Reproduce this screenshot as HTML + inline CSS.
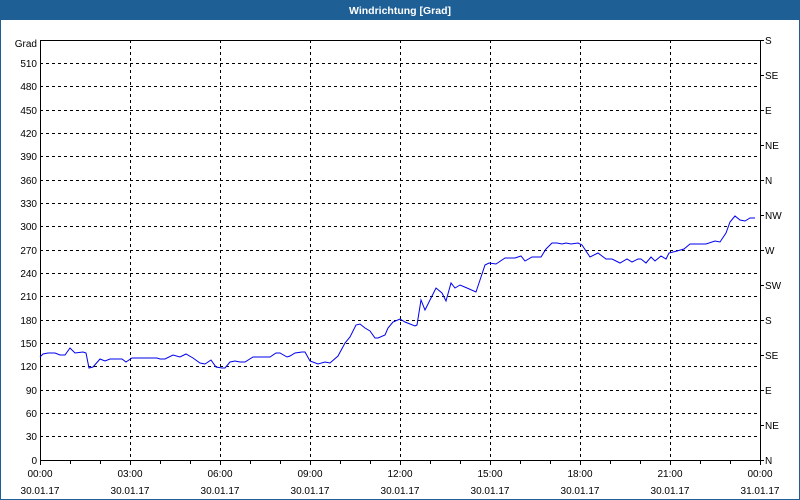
<!DOCTYPE html>
<html><head><meta charset="utf-8"><style>
html,body{margin:0;padding:0;background:#fff}
svg{display:block}
text{font-family:"Liberation Sans",sans-serif;font-size:10px;fill:#000}
</style></head><body>
<svg width="800" height="500" viewBox="0 0 800 500" xmlns="http://www.w3.org/2000/svg">
<rect x="0" y="0" width="800" height="500" fill="#1e6096"/>
<rect x="1" y="20" width="798" height="479" fill="#fff"/>
<text x="400" y="14" text-anchor="middle" style="font-weight:bold;fill:#fff;font-size:10.5px">Windrichtung [Grad]</text>
<g stroke="#000" stroke-width="1" stroke-dasharray="3,3" shape-rendering="crispEdges">
<path d="M40 63.5H760M40 86.5H760M40 110.5H760M40 133.5H760M40 156.5H760M40 180.5H760M40 203.5H760M40 226.5H760M40 250.5H760M40 273.5H760M40 296.5H760M40 320.5H760M40 343.5H760M40 366.5H760M40 390.5H760M40 413.5H760M40 436.5H760"/>
<path d="M130.5 40V460M220.5 40V460M310.5 40V460M400.5 40V460M490.5 40V460M580.5 40V460M670.5 40V460"/>
</g>
<g stroke="#000" stroke-width="1" fill="none" shape-rendering="crispEdges">
<rect x="40.5" y="40.5" width="720" height="420"/>
<path d="M760 40.5H764M760 75.5H764M760 110.5H764M760 145.5H764M760 180.5H764M760 215.5H764M760 250.5H764M760 285.5H764M760 320.5H764M760 355.5H764M760 390.5H764M760 425.5H764M760 460.5H764"/>
<path d="M40.5 460V465M70.5 460V464M100.5 460V464M130.5 460V465M160.5 460V464M190.5 460V464M220.5 460V465M250.5 460V464M280.5 460V464M310.5 460V465M340.5 460V464M370.5 460V464M400.5 460V465M430.5 460V464M460.5 460V464M490.5 460V465M520.5 460V464M550.5 460V464M580.5 460V465M610.5 460V464M640.5 460V464M670.5 460V465M700.5 460V464M730.5 460V464M760.5 460V465"/>
</g>
<polyline fill="none" stroke="#0000ee" stroke-width="1" points="40,357 43,354 48,353 55,353 60,355 65,355 70,348 75,353 83,352 86,353 89,368 93,367 100,359 105,361 110,359 118,359 122,359 126,362 132,358 157,358 160,359 165,359 173,355 180,357 186,354 193,358 200,363 205,364 211,360 216,367 222,368 225,368 230,362 235,361 240,362 245,362 253,357 270,357 276,353 280,353 287,357 290,356 295,353 302,352 305,352 310,361 318,364 325,362 330,363 338,356 345,343 350,337 356,325 360,324 365,328 370,331 375,338 378,338 385,335 388,328 393,322 400,319 405,322 415,326 417,325 421,300 425,310 436,288 442,293 446,301 451,283 455,288 460,285 467,288 476,292 480,280 485,265 489,263 496,264 505,258 515,258 521,256 525,261 532,257 541,257 546,249 552,243 557,243 562,244 566,243 571,244 578,243 582,245 590,257 598,253 606,259 612,259 620,263 627,259 632,262 638,259 641,259 646,263 651,257 655,261 661,256 666,259 669,253 677,251 684,249 690,244 706,244 715,241 720,242 726,233 730,222 735,216 740,220 745,221 750,218 755,218"/>
<g text-anchor="end">
<text x="37" y="47">Grad</text>
<text x="37" y="67">510</text><text x="37" y="90">480</text><text x="37" y="114">450</text>
<text x="37" y="137">420</text><text x="37" y="160">390</text><text x="37" y="184">360</text>
<text x="37" y="207">330</text><text x="37" y="230">300</text><text x="37" y="254">270</text>
<text x="37" y="277">240</text><text x="37" y="300">210</text><text x="37" y="324">180</text>
<text x="37" y="347">150</text><text x="37" y="370">120</text><text x="37" y="394">90</text>
<text x="37" y="417">60</text><text x="37" y="440">30</text><text x="37" y="464">0</text>
</g>
<g>
<text x="765" y="44">S</text><text x="765" y="79">SE</text><text x="765" y="114">E</text>
<text x="765" y="149">NE</text><text x="765" y="184">N</text><text x="765" y="219">NW</text>
<text x="765" y="254">W</text><text x="765" y="289">SW</text><text x="765" y="324">S</text>
<text x="765" y="359">SE</text><text x="765" y="394">E</text><text x="765" y="429">NE</text>
<text x="765" y="464">N</text>
</g>
<g text-anchor="middle">
<text x="40" y="477">00:00</text><text x="40" y="494">30.01.17</text>
<text x="130" y="477">03:00</text><text x="130" y="494">30.01.17</text>
<text x="220" y="477">06:00</text><text x="220" y="494">30.01.17</text>
<text x="310" y="477">09:00</text><text x="310" y="494">30.01.17</text>
<text x="400" y="477">12:00</text><text x="400" y="494">30.01.17</text>
<text x="490" y="477">15:00</text><text x="490" y="494">30.01.17</text>
<text x="580" y="477">18:00</text><text x="580" y="494">30.01.17</text>
<text x="670" y="477">21:00</text><text x="670" y="494">30.01.17</text>
<text x="760" y="477">00:00</text><text x="760" y="494">31.01.17</text>
</g>
</svg>
</body></html>
